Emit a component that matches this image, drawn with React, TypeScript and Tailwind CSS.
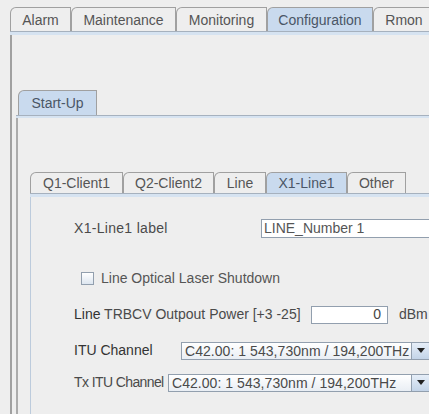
import React from "react";

type Tab = { label: string; width: number; selected?: boolean };

const mainTabs: Tab[] = [
  { label: "Alarm", width: 61 },
  { label: "Maintenance", width: 105 },
  { label: "Monitoring", width: 91 },
  { label: "Configuration", width: 106, selected: true },
  { label: "Rmon", width: 62 },
];

const lineTabs: Tab[] = [
  { label: "Q1-Client1", width: 93 },
  { label: "Q2-Client2", width: 91 },
  { label: "Line", width: 52 },
  { label: "X1-Line1", width: 81, selected: true },
  { label: "Other", width: 59 },
];

function TabStrip({ tabs, height }: { tabs: Tab[]; height: string }) {
  return (
    <div className={`flex items-end ${height}`}>
      {tabs.map((tab) => (
        <div
          key={tab.label}
          style={{ width: tab.width }}
          className={`flex h-full shrink-0 items-center justify-center whitespace-nowrap rounded-tl-[6px] border-t border-l border-r border-[#a0a0a0] pt-[1px] ${
            tab.selected ? "bg-[#c9daee] text-[#4a5666]" : "bg-[#eeeeee] text-[#555]"
          }`}
        >
          {tab.label}
        </div>
      ))}
    </div>
  );
}

function Band({ height }: { height: string }) {
  return <div className={`${height} border-t border-[#a6b1be] bg-[#d6e3f1]`} />;
}

function ComboBox({ width, value }: { width: string; value: string }) {
  return (
    <div className={`flex h-[18px] ${width} shrink-0 border border-[#929fae] bg-gradient-to-b from-[#ffffff] to-[#e9eef4]`}>
      <div className="flex min-w-0 flex-1 items-center overflow-hidden whitespace-nowrap px-[3px] leading-none tracking-[0.05px] text-[#4a4a4a]">
        {value}
      </div>
      <div className="flex w-[19px] shrink-0 items-center justify-center border-l border-[#929fae] bg-gradient-to-b from-[#e6eef8] to-[#c3d4e8]">
        <svg width="8" height="5" viewBox="0 0 8 5">
          <path d="M0 0 H8 L4 5 Z" fill="#222" />
        </svg>
      </div>
    </div>
  );
}

export default function App() {
  return (
    <div className="h-[414px] w-[429px] overflow-hidden bg-[#eeeeee] text-[14px] text-[#4a4a4a] [font-family:'Liberation_Sans',Arial,sans-serif]">
      <div className="ml-[10px] mt-[7px]">
        {/* Top level tabs */}
        <TabStrip tabs={mainTabs} height="h-[24px]" />
        <Band height="h-[4px]" />
        <div className="border-l-2 border-[#a0a0a0] pl-[4px] pt-[55px]">
          {/* Start-Up pane */}
          <div className="ml-[2px] flex h-[25px] items-end">
            <div className="flex h-full w-[79px] items-center justify-center rounded-tl-[6px] border-t border-l border-r border-[#a0a0a0] bg-[#c9daee] text-[#4a5666]">
              Start-Up
            </div>
          </div>
          <Band height="h-[3px]" />
          <div className="border-l-2 border-[#ababab] pl-[12px] pt-[54px]">
            {/* Line tabs */}
            <TabStrip tabs={lineTabs} height="h-[21px]" />
            <Band height="h-[4px]" />
            <div className="h-[240px] border-l border-[#bccbdc] pl-[43px] pt-[21px]">
              <div className="flex items-center">
                <div className="w-[187px] shrink-0 whitespace-nowrap tracking-[0.3px]">X1-Line1 label</div>
                <div className="flex h-[19px] w-[200px] shrink-0 items-center whitespace-nowrap border border-[#929fae] bg-white px-[2px] text-[#555]">
                  LINE_Number 1
                </div>
              </div>

              <div className="mt-[29px] flex items-center pl-[7px]">
                <div className="h-[13px] w-[13px] shrink-0 border border-[#929fae] bg-gradient-to-b from-[#ffffff] to-[#dde6f0]" />
                <div className="ml-[7px] whitespace-nowrap text-[#555]">Line Optical Laser Shutdown</div>
              </div>

              <div className="mt-[15px] flex items-center">
                <div className="w-[237px] shrink-0 whitespace-nowrap">
                  <span className="text-[#333]">Line</span> TRBCV Outpout Power [+3 -25]
                </div>
                <div className="flex h-[18px] w-[77px] shrink-0 items-center justify-end border border-[#929fae] bg-white pr-[6px] text-[#444]">
                  0
                </div>
                <div className="ml-[11px] whitespace-nowrap">dBm</div>
              </div>

              <div className="mt-[15px] flex items-center">
                <div className="w-[107px] shrink-0 whitespace-nowrap text-[#333]">ITU Channel</div>
                <ComboBox width="w-[250px]" value="C42.00: 1 543,730nm / 194,200THz" />
              </div>

              <div className="mt-[11px] flex items-center">
                <div className="w-[94px] shrink-0 whitespace-nowrap tracking-[-0.6px]">Tx ITU Channel</div>
                <ComboBox width="w-[263px]" value="C42.00: 1 543,730nm / 194,200THz" />
              </div>
            </div>
          </div>
        </div>
      </div>
    </div>
  );
}
